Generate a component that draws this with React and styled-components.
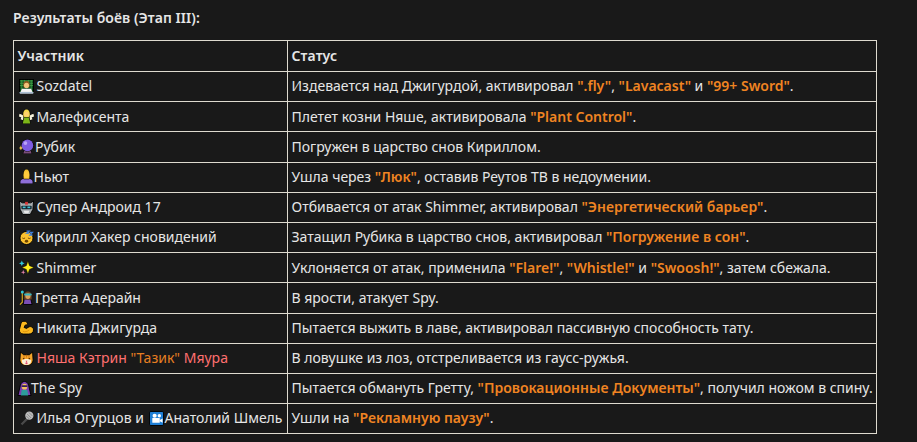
import React from "react";
import styled, { createGlobalStyle } from "styled-components";

const Global = createGlobalStyle`
  html, body { margin: 0; padding: 0; background: #191919; }
  body { font-family: "Noto Sans", "Open Sans", sans-serif; font-size: 14px; color: #e6e6e6; }
`;
const Page = styled.main`
  width: 917px; height: 442px; box-sizing: border-box; padding: 7px 0 0 13px; overflow: hidden; background: #191919;
`;
const Title = styled.p`
  margin: 0 0 11px; font-weight: 640; line-height: 22px; color: #e6e6e6; letter-spacing: .07px;
`;
const Table = styled.table`
  width: 864px; border-collapse: collapse; table-layout: fixed; line-height: 22px;
  border: 1px solid #dedbd0;
`;
const Th = styled.th`
  border: 1px solid #dedbd0; padding: 4px 4px 4px 3.500px; text-align: left; font-weight: 640; height: 22px; letter-spacing: .1px;
  width: ${p => p.$w || "auto"};
`;
const Td = styled.td`
  border: 1px solid #dedbd0; padding: 3.400px 3.500px 3.800px; white-space: nowrap; height: 22px;
`;
const Hot = styled.strong`
  color: #f08422; font-weight: 600;
`;
const Pink = styled.span`
  color: #ff7070;
`;
const Amber = styled.span`
  color: #e67e22;
`;
const Icon = styled.svg`
  display: inline-block; width: 15px; height: 15px; vertical-align: -2.500px;
  margin-left: ${p => p.$l ?? 1.500}px; margin-right: ${p => p.$r ?? 2.500}px;
`;

const O = { stroke: "#000", strokeWidth: 1, paintOrder: "stroke" };

const E = {
  tech: <g><rect x=".5" y=".5" width="15" height="15" fill="#0c4a1a" stroke="#000"/><path d="M1 2h14M1 4.500h14M1 7h14M3 1v10M6 1v3M10 1v3M13 1v10" stroke="#4aa84e" strokeWidth=".8"/><path d="M4.500 6.500C4.500 3 6 2 8 2s3.500 1 3.500 4.500L11 9H5z" fill="#8a5a20"/><ellipse cx="8" cy="7" rx="2.700" ry="2.900" fill="#f2c27a"/><path d="M1 15.500l2-5h10l2 5z" fill="#f4f4f4"/><rect x=".5" y="13.800" width="15" height="1.700" fill="#a9bdd2"/></g>,
  fairy: <g {...O}><path d="M.5 5l5 2-1 5-3-1 1-2-2.500-1z M15.500 5l-5 2 1 5 3-1-1-2 2.500-1z" fill="#f7f3dc"/><path d="M4.500 6C4.500 2 6 .5 8 .5S11.500 2 11.500 6L11 9H5z" fill="#f5d94a"/><path d="M4 15.500l1.500-6.500h5l1.500 6.500z" fill="#7cb518"/><ellipse cx="8" cy="5.500" rx="2.400" ry="2.800" fill="#ffd36e" stroke="none"/></g>,
  ball: <g {...O}><path d="M4.500 15.500l1.500-4h6l1.500 4z" fill="#7a4f7a"/><circle cx="9" cy="6.800" r="6.200" fill="#7d5be0"/><circle cx="6.800" cy="4.300" r="2" fill="#b9a3f5" stroke="none"/><path d="M2 7l.8 1.700L4 9.500l-1.200.8L2 12l-.8-1.700L0 9.500l1.200-.8z" fill="#f3c94b" stroke="none"/></g>,
  person: <g {...O}><path d="M1.500 15.500v-2C1.500 11 4.500 10 8 10s6.500 1 6.500 3.500v2z" fill="#8f6fd8"/><path d="M4.800 7C4.800 2.500 6 .5 8 .5S11.200 2.500 11.200 7L11 10.500H5z" fill="#f2c230"/><ellipse cx="8" cy="6" rx="2.800" ry="3.600" fill="#ffcb3d" stroke="none"/></g>,
  android: <g><path d="M.5 1l3 2h9l3-2-.7 9-2.800 5.500H4L1.200 10z" fill="#a8adb0" stroke="#000"/><rect x="6.500" y="2" width="3" height="3" fill="#d93636"/><rect x="2.500" y="6" width="11" height="3.800" rx="1" fill="#14262e"/><rect x="4" y="7" width="3" height="1.700" fill="#43c4d9"/><rect x="9" y="7" width="3" height="1.700" fill="#43c4d9"/><path d="M5 11.500h6l-1 2.500H6z" fill="#e8e8e8"/></g>,
  sleep: <g><circle cx="8" cy="8.500" r="7" fill="#fcc22f" stroke="#000"/><path d="M3.500 8.500q1.500 1.200 3 0M9.500 8.500q1.500 1.200 3 0" stroke="#6b4300" strokeWidth="1" fill="none"/><ellipse cx="8" cy="12" rx="1.800" ry="1.500" fill="#6b4300"/><path d="M8 1h3L8 3.500h3M11.500 2.500h3l-3 3h3" stroke="#3d7fe0" strokeWidth="1.200" fill="none"/></g>,
  spark: <g><path d="M9.500 1l1.700 5 4.800 2-4.800 2-1.700 5-1.700-5L3 8l4.800-2z" fill="#ffee1a" stroke="#000" strokeWidth=".5"/><path d="M3 .5l.9 2.100 2.100.9-2.100.9L3 6.500l-.9-2.100L0 3.500l2.100-.9z" fill="#2fc4d6"/><path d="M4.500 10.500l.6 1.900 1.900.6-1.900.6-.6 1.900-.6-1.900L2 13l1.900-.6z" fill="#f28ab4"/></g>,
  mage: <g><path d="M4.500 15.500l1-6h7l1.500 6z" fill="#7a4fb5" stroke="#000"/><path d="M5.500 7C5.500 3 7 1.500 9.500 1.500S13.500 3 13.500 7V10H5.500z" fill="#6a4420"/><ellipse cx="9.500" cy="6.500" rx="2.800" ry="3" fill="#dba15c"/><rect x="5.500" y="3.800" width="8" height="2" rx=".8" fill="#37b7c4"/><path d="M3.500 3v10L1 15.500" stroke="#d6ac20" strokeWidth="1.200" fill="none"/><circle cx="3.500" cy="2" r="1.600" fill="#2fc4d6"/></g>,
  arm: <g><path d="M7 1.500C4.500.8 2.500 1.800 2 4l-1.500 6c-.5 3 1.500 5 4.500 5h5.500c3 0 5-1.800 5-4.500S13 6.500 11 7.200c-1 .3-2 1-2.800 1.800L5.500 8l1-2.500 2-.3c1-.2 1-3-1.500-3.700z" fill="#fbb81e" stroke="#000"/><path d="M4 12c2 1 5 .5 7-1.500" stroke="#d78c08" strokeWidth=".8" fill="none"/></g>,
  cat: <g><path d="M1.500 1l3.500 3h6l3.500-3 .5 8c.3 4-3 6.500-7 6.500s-7.300-2.500-7-6.500z" fill="#f4a52a" stroke="#000"/><path d="M8 4v3M5 4.500l.7 2.500M11 4.500l-.7 2.500" stroke="#c96b10" strokeWidth=".8"/><path d="M3 10.500c0-1.500 2-2 5-2s5 .5 5 2c0 3-2 4.500-5 4.500s-5-1.500-5-4.500z" fill="#fdf1d6"/><circle cx="5" cy="8" r=".9" fill="#5c2d00"/><circle cx="11" cy="8" r=".9" fill="#5c2d00"/><path d="M7 10.500h2L8 12z" fill="#e0456b"/><ellipse cx="8" cy="13" rx="1.200" ry="1" fill="#e0456b"/></g>,
  spy: <g><path d="M1 15.500l2.500-10.500C4 2 6 .5 8 .5s4 1.500 4.500 4.500l2.500 10.500z" fill="#7b3fb0" stroke="#000"/><ellipse cx="8" cy="6" rx="2.900" ry="3.100" fill="#f2c15a"/><rect x="4.800" y="4.500" width="6.400" height="1.800" rx=".7" fill="#351a57"/><path d="M4 15.500l1-6h6l1 6z" fill="#2e9c9c"/></g>,
  mic: <g><path d="M1.500 13.500L8 7l2 2-6.500 6.500z" fill="#4a4a4a" stroke="#111" strokeWidth=".5"/><circle cx="11" cy="5" r="4.400" fill="#bdbdbd"/><path d="M8.500 3l4.500 4.500M10.500 1.500l4 4M7.500 5l3.500 3.500" stroke="#6f6f6f" strokeWidth=".7"/></g>,
  film: <g><rect x=".5" y=".5" width="15" height="15" rx="1.500" fill="#1f7fd6" stroke="#000"/><circle cx="6" cy="5" r="2.200" fill="#fff"/><circle cx="11" cy="5" r="1.800" fill="#fff"/><rect x="3.500" y="7.500" width="8" height="5" rx=".6" fill="#fff"/><path d="M11.500 9.500l3-1.500v4.500l-3-1.500z" fill="#fff"/></g>
};

const Emoji = ({ name, l, r }) => (
  <Icon viewBox="0 0 16 16" $l={l} $r={r} aria-hidden="true">{E[name]}</Icon>
);

const rows = [
  [<><Emoji name="tech" />Sozdatel</>, <>Издевается над Джигурдой, активировал <Hot>".fly"</Hot>, <Hot>"Lavacast"</Hot> и <Hot>"99+ Sword"</Hot>.</>],
  [<><Emoji name="fairy" />Малефисента</>, <>Плетет козни Няше, активировала <Hot>"Plant Control"</Hot>.</>],
  [<><Emoji name="ball" r={1} />Рубик</>, <>Погружен в царство снов Кириллом.</>],
  [<><Emoji name="person" r={-.500} />Ньют</>, <>Ушла через <Hot>"Люк"</Hot>, оставив Реутов ТВ в недоумении.</>],
  [<><Emoji name="android" />Супер Андроид 17</>, <>Отбивается от атак Shimmer, активировал <Hot>"Энергетический барьер"</Hot>.</>],
  [<><Emoji name="sleep" />Кирилл Хакер сновидений</>, <>Затащил Рубика в царство снов, активировал <Hot>"Погружение в сон"</Hot>.</>],
  [<><Emoji name="spark" />Shimmer</>, <>Уклоняется от атак, применила <Hot>"Flare!"</Hot>, <Hot>"Whistle!"</Hot> и <Hot>"Swoosh!"</Hot>, затем сбежала.</>],
  [<><Emoji name="mage" r={1} />Гретта Адерайн</>, <>В ярости, атакует Spy.</>],
  [<><Emoji name="arm" />Никита Джигурда</>, <>Пытается выжить в лаве, активировал пассивную способность тату.</>],
  [<><Emoji name="cat" /><Pink>Няша Кэтрин <Amber>"Тазик"</Amber> Мяура</Pink></>, <>В ловушке из лоз, отстреливается из гаусс-ружья.</>],
  [<><Emoji name="spy" l={-.500} r={-1} />The Spy</>, <>Пытается обмануть Гретту, <Hot>"Провокационные Документы"</Hot>, получил ножом в спину.</>],
  [<><Emoji name="mic" />Илья Огурцов и <Emoji name="film" l={1.500} r={.500} />Анатолий Шмель</>, <>Ушли на <Hot>"Рекламную паузу"</Hot>.</>],
];

export default function App() {
  return (
    <Page>
      <Global />
      <Title>Результаты боёв (Этап III):</Title>
      <Table>
        <thead>
          <tr><Th $w="265.500px">Участник</Th><Th>Статус</Th></tr>
        </thead>
        <tbody>
          {rows.map((r, i) => (
            <tr key={i}><Td>{r[0]}</Td><Td>{r[1]}</Td></tr>
          ))}
        </tbody>
      </Table>
    </Page>
  );
}
